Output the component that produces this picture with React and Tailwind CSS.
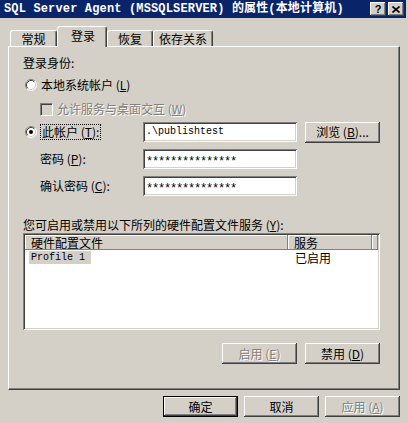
const raised =
    "shadow-[inset_-1px_-1px_#404040,inset_1px_1px_#ffffff,inset_-2px_-2px_#808080,inset_2px_2px_#d4d0c8]";
const sunken =
    "shadow-[inset_1px_1px_#808080,inset_-1px_-1px_#ffffff,inset_2px_2px_#404040,inset_-2px_-2px_#d4d0c8]";
const grayText = "text-[#808080] [text-shadow:1px_1px_0_#ffffff]";
const mono = "font-['Liberation_Mono','Noto_Sans_CJK_SC',monospace]";
const headCell = "shadow-[inset_-1px_-1px_#808080,inset_1px_1px_#ffffff]";

const Radio = ({checked}) => (
    <svg width="12" height="12" viewBox="0 0 12 12">
        <circle cx="6" cy="6" r="5" fill="#ffffff" />
        <path d="M2.11 9.89 A5.5 5.5 0 0 1 9.89 2.11" stroke="#808080" fill="none" />
        <path d="M9.89 2.11 A5.5 5.5 0 0 1 2.11 9.89" stroke="#ffffff" fill="none" />
        <path d="M2.82 9.18 A4.5 4.5 0 0 1 9.18 2.82" stroke="#404040" fill="none" />
        <path d="M9.18 2.82 A4.5 4.5 0 0 1 2.82 9.18" stroke="#d4d0c8" fill="none" />
        {checked && <circle cx="6" cy="6" r="2" fill="#000000" />}
    </svg>
);

const Btn = ({children, disabled, isDefault}) => (
    <div
        className={
            "w-[75px] h-[21px] flex items-center justify-center bg-[#d4d0c8] " +
            raised +
            (isDefault ? " border border-black" : "") +
            (disabled ? " " + grayText : " text-black")
        }
    >
        {children}
    </div>
);

const Tab = ({label, w, selected}) => (
    <div
        className={
            selected
                ? "relative z-10 h-[21px] -mb-px bg-[#d4d0c8] border-t border-l border-white border-r border-r-[#404040] rounded-t-[3px] shadow-[inset_-1px_0_#808080] flex justify-center pt-[2px] pl-[2px]"
                : "h-[16px] bg-[#d4d0c8] border-t border-l border-white border-r border-r-[#404040] rounded-t-[3px] shadow-[inset_-1px_0_#808080] flex items-center justify-center pt-[1px]"
        }
        style={{width: w}}
    >
        {label}
    </div>
);

const Field = ({children}) => (
    <div className={"w-[154px] h-[20px] bg-white flex items-center pl-[3px] " + sunken}>
        {children}
    </div>
);

const Stars = () => (
    <span className={mono + " text-[12px] tracking-[-1.2px] relative top-[3px]"}>
        ***************
    </span>
);

export default function App() {
    return (
        <div className="w-[408px] h-[423px] bg-[#d4d0c8] flex flex-col text-[12px] leading-[14px] text-black font-['Noto_Sans_CJK_SC',sans-serif] overflow-hidden">
            {/* title bar */}
            <div className="w-[406px] h-[18px] bg-[#0a246a] flex items-center pl-[4px] pr-[2px]">
                <div className="flex-1 text-white font-bold text-[12px] leading-[14px] whitespace-nowrap tracking-[0.15px] font-['Liberation_Mono','Noto_Sans_CJK_SC',monospace]">
                    SQL Server Agent (MSSQLSERVER) 的属性(本地计算机)
                </div>
                <div className={"w-[16px] h-[14px] bg-[#d4d0c8] flex items-center justify-center font-bold text-[11px] font-['Liberation_Sans',sans-serif] " + raised}>
                    ?
                </div>
                <div className={"ml-[2px] w-[16px] h-[14px] bg-[#d4d0c8] flex items-center justify-center " + raised}>
                    <svg width="8" height="7" viewBox="0 0 8 7">
                        <path d="M0.5 0.5 L7.5 6.5 M7.5 0.5 L0.5 6.5" stroke="#000" strokeWidth="1.6" />
                    </svg>
                </div>
            </div>

            {/* tabs */}
            <div className="mt-[8px] ml-[10px] h-[20px] flex items-end">
                <Tab label="常规" w={47} />
                <Tab label="登录" w={50} selected />
                <Tab label="恢复" w={46} />
                <Tab label="依存关系" w={60} />
            </div>

            {/* panel */}
            <div className="ml-[8px] w-[392px] h-[344px] border-t border-l border-white border-r border-b border-r-[#404040] border-b-[#404040] shadow-[inset_-1px_-1px_#808080] flex flex-col pl-[14px] pt-[9px]">
                <div className="h-[14px] flex items-center">登录身份:</div>

                <div className="mt-[8px] h-[14px] flex items-center">
                    <div className="ml-[2px] mr-[4px] flex">
                        <Radio />
                    </div>
                    本地系统帐户 (<u>L</u>)
                </div>

                <div className="mt-[10px] h-[14px] flex items-center">
                    <div className="ml-[17px] mr-[4px] w-[13px] h-[13px] bg-[#d4d0c8] border border-t-[#808080] border-l-[#808080] border-r-white border-b-white shadow-[inset_1px_1px_#404040]" />
                    <span className={grayText}>允许服务与桌面交互 (<u>W</u>)</span>
                </div>

                <div className="mt-[6px] h-[20px] flex items-center">
                    <div className="w-[17px] pl-[2px] flex">
                        <Radio checked />
                    </div>
                    <div className="w-[103px] flex">
                        <span className="border border-dotted border-black px-[1px] h-[16px] flex items-center">
                            此帐户 (<u>T</u>):
                        </span>
                    </div>
                    <Field>
                        <span className={mono + " text-[10px]"}>.\publishtest</span>
                    </Field>
                    <div className="ml-[8px]">
                        <Btn>浏览 (<u>B</u>)...</Btn>
                    </div>
                </div>

                <div className="mt-[7px] h-[20px] flex items-center">
                    <div className="w-[17px]" />
                    <div className="w-[103px]">
                        密码 (<u>P</u>):
                    </div>
                    <Field>
                        <Stars />
                    </Field>
                </div>

                <div className="mt-[7px] h-[20px] flex items-center">
                    <div className="w-[17px]" />
                    <div className="w-[103px]">
                        确认密码 (<u>C</u>):
                    </div>
                    <Field>
                        <Stars />
                    </Field>
                </div>

                <div className="mt-[22px] h-[14px] flex items-center">
                    您可启用或禁用以下所列的硬件配置文件服务 (<u>Y</u>):
                </div>

                {/* list */}
                <div className={"mt-[1px] w-[357px] h-[97px] bg-white p-[2px] flex flex-col " + sunken}>
                    <div className="h-[15px] flex bg-[#d4d0c8] leading-[13px]">
                        <div className={"w-[263px] pl-[6px] flex items-center " + headCell}>
                            硬件配置文件
                        </div>
                        <div className={"w-[84px] pl-[6px] flex items-center " + headCell}>
                            服务
                        </div>
                        <div className={"flex-1 " + headCell} />
                    </div>
                    <div className="h-[14px] flex items-center leading-[13px]">
                        <div className="w-[263px] pl-[4px] flex">
                            <span className={mono + " text-[10px] bg-[#d4d0c8] w-[62px] pl-[2px] leading-[13px]"}>
                                Profile 1
                            </span>
                        </div>
                        <div className="pl-[7px]">已启用</div>
                    </div>
                </div>

                <div className="mt-[13px] w-[357px] flex justify-end gap-[8px]">
                    <Btn disabled>启用 (<u>E</u>)</Btn>
                    <Btn>禁用 (<u>D</u>)</Btn>
                </div>
            </div>

            {/* dialog buttons */}
            <div className="mt-[6px] pl-[163px] flex gap-[6px]">
                <Btn isDefault>确定</Btn>
                <Btn>取消</Btn>
                <Btn disabled>应用 (<u>A</u>)</Btn>
            </div>
        </div>
    );
}
